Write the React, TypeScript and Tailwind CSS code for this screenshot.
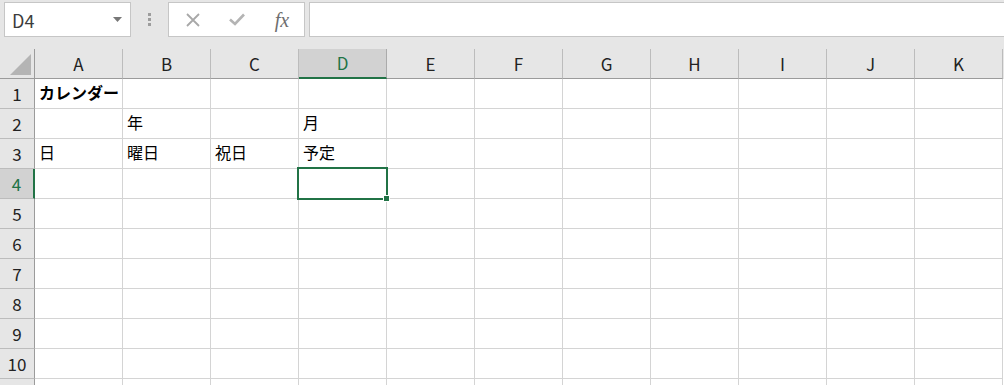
const COLS = ["A", "B", "C", "D", "E", "F", "G", "H", "I", "J", "K"];
const ROWS = [1, 2, 3, 4, 5, 6, 7, 8, 9, 10, 11];

const data: Record<string, { text: string; bold?: boolean }> = {
  A1: { text: "カレンダー", bold: true },
  B2: { text: "年" },
  D2: { text: "月" },
  A3: { text: "日" },
  B3: { text: "曜日" },
  C3: { text: "祝日" },
  D3: { text: "予定" },
};

const font = { fontFamily: '"Noto Sans CJK JP", "Noto Sans", sans-serif' };

function FormulaBar() {
  return (
    <div className="flex items-start h-[49px] bg-[#e6e6e6] pt-[2px] pl-[4px]">
      <div className="flex items-center justify-between w-[127px] h-[35px] bg-white border border-[#c6c6c6] pl-[7px] pr-[8px]">
        <span className="text-[18px] text-[#3c3c3c] leading-none">D4</span>
        <svg width="9" height="5" viewBox="0 0 9 5">
          <path d="M0 0 L9 0 L4.5 5 Z" fill="#777" />
        </svg>
      </div>
      <div className="w-[37px] h-[35px] flex flex-col items-center justify-center gap-[2px]">
        <div className="w-[3px] h-[3px] bg-[#9d9d9d]" />
        <div className="w-[3px] h-[3px] bg-[#9d9d9d]" />
        <div className="w-[3px] h-[3px] bg-[#9d9d9d]" />
      </div>
      <div className="flex items-center w-[137px] h-[35px] bg-white border border-[#c6c6c6]">
        <div className="w-[45px] flex justify-center pl-[2px]">
          <svg width="14" height="14" viewBox="0 0 14 14">
            <path d="M1 1 L13 13 M13 1 L1 13" stroke="#a8a8a8" strokeWidth="1.8" />
          </svg>
        </div>
        <div className="w-[46px] flex justify-center">
          <svg width="16" height="13" viewBox="0 0 16 13">
            <path d="M1 6.5 L6 11 L15 1.5" stroke="#b4b4b4" strokeWidth="2.6" fill="none" />
          </svg>
        </div>
        <div className="w-[44px] flex justify-center">
          <span
            className="italic text-[20px] text-[#6e6e6e] leading-none"
            style={{ fontFamily: '"Liberation Serif", serif' }}
          >
            fx
          </span>
        </div>
      </div>
      <div className="ml-[4px] flex-1 h-[35px] bg-white border border-[#c6c6c6] border-r-0" />
    </div>
  );
}

function HeaderRow() {
  return (
    <div className="flex h-[30px] bg-[#e6e6e6]">
      <div className="w-[35px] h-[30px] shrink-0 border-r border-b border-[#9b9b9b] flex items-end justify-end pr-[3px] pb-[3px]">
        <svg width="21" height="21" viewBox="0 0 21 21">
          <path d="M21 0 L21 21 L0 21 Z" fill="#b4b4b4" />
        </svg>
      </div>
      {COLS.map((c) => {
        const sel = c === "D";
        return (
          <div
            key={c}
            className={
              sel
                ? "w-[88px] h-[30px] shrink-0 bg-[#d2d2d2] border-r border-[#ababab] border-b-2 border-b-[#217346] flex items-center justify-center text-[17px] text-[#217346]"
                : "w-[88px] h-[30px] shrink-0 border-r border-[#bcbcbc] border-b border-b-[#9b9b9b] flex items-center justify-center text-[17px] text-[#222]"
            }
          >
            {c}
          </div>
        );
      })}
    </div>
  );
}

function Row({ r }: { r: number }) {
  const sel = r === 4;
  return (
    <div className="flex h-[30px]">
      <div
        className={
          sel
            ? "w-[35px] h-[30px] shrink-0 bg-[#d2d2d2] border-r-2 border-r-[#217346] border-b border-b-[#bcbcbc] flex items-center justify-center text-[17px] text-[#217346]"
            : "w-[35px] h-[30px] shrink-0 bg-[#e6e6e6] border-r border-r-[#9b9b9b] border-b border-b-[#bcbcbc] flex items-center justify-center text-[17px] text-[#222]"
        }
      >
        {r <= 10 ? r : ""}
      </div>
      {COLS.map((c) => {
        const cell = data[c + r];
        const active = c === "D" && r === 4;
        return (
          <div
            key={c}
            className="relative w-[88px] h-[30px] shrink-0 border-r border-b border-[#d4d4d4] flex items-center pl-[4px] pb-[3px] text-[16px] text-black whitespace-nowrap"
          >
            {cell && <span className={cell.bold ? "font-bold" : ""}>{cell.text}</span>}
            {active && (
              <>
                <div className="absolute z-10 left-[-2px] top-[-2px] w-[91px] h-[33px] border-2 border-[#217346]" />
                <div className="absolute z-20 right-[-4px] bottom-[-4px] w-[7px] h-[7px] bg-[#217346] border border-white" />
              </>
            )}
          </div>
        );
      })}
    </div>
  );
}

export default function App() {
  return (
    <div className="w-[1004px] h-[385px] overflow-hidden bg-white" style={font}>
      <FormulaBar />
      <HeaderRow />
      {ROWS.map((r) => (
        <Row key={r} r={r} />
      ))}
    </div>
  );
}
